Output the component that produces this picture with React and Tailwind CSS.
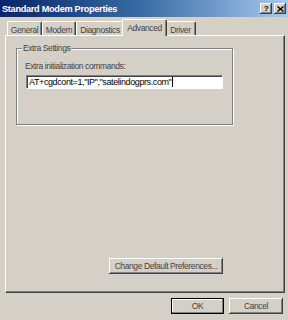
const raised =
  'shadow-[inset_-1px_-1px_#404040,inset_1px_1px_#ffffff,inset_-2px_-2px_#808080,inset_2px_2px_#d4d0c8]';

const TABS = [
  { label: 'General', w: 'w-[35px]' },
  { label: 'Modem', w: 'w-[34px]' },
  { label: 'Diagnostics', w: 'w-[48px]' },
  { label: 'Advanced', w: 'w-[45px]', active: true },
  { label: 'Driver', w: 'w-[31px]' },
];

function Tab({ label, w, active }) {
  if (active) {
    return (
      <div
        className={`${w} -mx-[2px] h-[17px] relative z-10 flex items-start justify-center pt-[3px] bg-[#d4d0c8] rounded-t-[2px] border-l border-t border-white border-r border-r-[#404040] shadow-[inset_-1px_0_#808080]`}
      >
        {label}
      </div>
    );
  }
  return (
    <div
      className={`${w} h-[15px] flex items-start justify-center pt-[3px] bg-[#d4d0c8] rounded-t-[2px] border-l border-t border-white border-r border-r-[#404040] shadow-[inset_-1px_0_#808080]`}
    >
      {label}
    </div>
  );
}

function Button({ children, className = '', def }) {
  return (
    <div
      className={`h-[16px] flex items-center justify-center bg-[#d4d0c8] ${
        def
          ? 'border border-black shadow-[inset_-1px_-1px_#808080,inset_1px_1px_#ffffff]'
          : raised
      } ${className}`}
    >
      {children}
    </div>
  );
}

export default function App() {
  return (
    <div
      className="w-[288px] h-[320px] bg-[#d4d0c8] flex flex-col text-[8.5px] tracking-[-0.4px] leading-[10px] text-black overflow-hidden"
      style={{ fontFamily: '"Liberation Sans", Arial, sans-serif' }}
    >
      {/* title bar */}
      <div className="h-[17px] flex items-center justify-between pl-[2px] pr-[2px] bg-gradient-to-r from-[#0a246a] via-[#3a6ea5] to-[#a6caf0]">
        <span className="text-white font-bold text-[9.2px] tracking-[-0.3px]">Standard Modem Properties</span>
        <div className="flex gap-[2px]">
          <div className={`w-[12px] h-[11px] flex items-center justify-center bg-[#d4d0c8] text-[8px] font-bold leading-none ${raised}`}>?</div>
          <div className={`w-[12px] h-[11px] flex items-center justify-center bg-[#d4d0c8] ${raised}`}>
            <svg width="7" height="6" viewBox="0 0 7 6">
              <path d="M0.5 0.5 L6.5 5.5 M6.5 0.5 L0.5 5.5" stroke="#000" strokeWidth="1.4" />
            </svg>
          </div>
        </div>
      </div>

      {/* tabs */}
      <div className="flex items-end ml-[7px] mt-[2px] text-[#444]">
        {TABS.map((t) => (
          <Tab key={t.label} {...t} />
        ))}
      </div>

      {/* tab panel */}
      <div className="ml-[5px] w-[280px] h-[258px] flex flex-col -mt-[1px] border-l border-t border-white border-r border-b border-r-[#404040] border-b-[#404040] shadow-[inset_-1px_-1px_#808080]">
        <div className="relative ml-[10px] mt-[12px] w-[217px] h-[77px] border border-[#808080] shadow-[inset_1px_1px_#ffffff,1px_1px_#ffffff] pl-[8px] pt-[12px]">
          <span className="absolute -top-[6px] left-[5px] px-[1px] bg-[#d4d0c8] text-[#444]">Extra Settings</span>
          <div className="text-[#444]">Extra initialization commands:</div>
          <div className="mt-[4px] ml-[1px] w-[197px] h-[14px] bg-white flex items-center pl-[2px] text-[9px] border-l border-t border-[#808080] border-r border-b border-r-white border-b-white shadow-[inset_1px_1px_#404040]">
            <span>AT+cgdcont=1,"IP","satelindogprs.com"</span>
            <span className="w-px h-[10px] bg-black ml-[1px]" />
          </div>
        </div>
        <Button className="mt-auto mb-[18px] ml-[103px] w-[114px] text-[#444]">
          Change Default Preferences...
        </Button>
      </div>

      {/* dialog buttons */}
      <div className="flex gap-[5px] ml-[171px] mt-[5px] text-[#444]">
        <Button def className="w-[53px]">OK</Button>
        <Button className="w-[54px]">Cancel</Button>
      </div>
    </div>
  );
}
